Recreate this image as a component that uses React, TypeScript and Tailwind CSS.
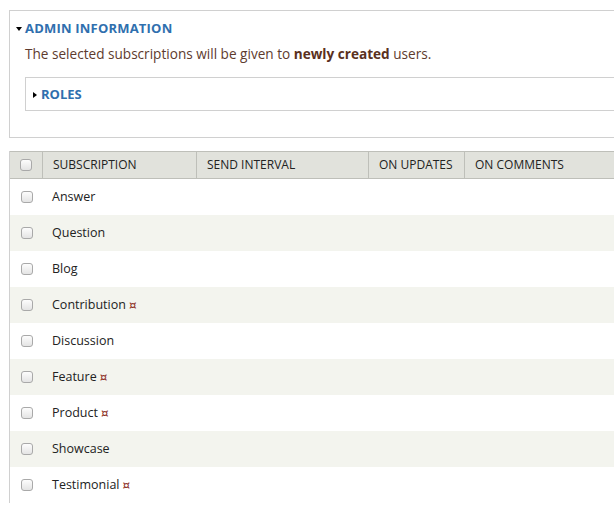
import React from "react";

const rows: { name: string; mark?: boolean }[] = [
  { name: "Answer" },
  { name: "Question" },
  { name: "Blog" },
  { name: "Contribution", mark: true },
  { name: "Discussion" },
  { name: "Feature", mark: true },
  { name: "Product", mark: true },
  { name: "Showcase" },
  { name: "Testimonial", mark: true },
];

function Box() {
  return (
    <span className="block w-[12px] h-[12px] rounded-[3px] border border-[#a9a9a9] bg-gradient-to-b from-[#fdfdfd] to-[#e4e4e4]" />
  );
}

export default function App() {
  return (
    <div className="w-[614px] h-[505px] overflow-hidden bg-white text-[13px] text-[#333] font-['Open_Sans',sans-serif]">
      <div className="pt-[10px] pl-[9px]">
        <div className="w-[640px] h-[128px] border border-[#d0d0d0] pl-[6px]">
          <div className="flex items-center h-[34px] pt-[2px] text-[#2f6fae] font-bold text-[13px] tracking-[0.2px]">
            <span className="inline-block w-0 h-0 border-l-[3.5px] border-r-[3.5px] border-t-[4px] border-l-transparent border-r-transparent border-t-[#000] mr-[3px]" />
            ADMIN INFORMATION
          </div>
          <div className="pl-[9px] text-[#5e3b2e] text-[13.6px] h-[24px] flex items-center pb-[5px]">
            <span>
              The selected subscriptions will be given to <b className="font-bold text-[#5a3020]">newly created</b> users.
            </span>
          </div>
          <div className="ml-[9px] mt-[8px] h-[34px] border border-[#d0d0d0] flex items-center pl-[7px] pt-[1px] text-[#2f6fae] font-bold">
            <span className="inline-block w-0 h-0 border-t-[3.5px] border-b-[3.5px] border-l-[4px] border-t-transparent border-b-transparent border-l-[#000] mr-[4px]" />
            ROLES
          </div>
        </div>
      </div>
      <div className="pl-[9px] mt-[13px]">
        <div className="w-[640px] border-l border-[#d0d0d0]">
          <div className="flex h-[28px] bg-[#e1e2dc] border-t border-b border-[#bebfb9] text-[#222] text-[12px]">
            <div className="w-[33px] flex items-center justify-center border-r border-[#bebfb9]">
              <Box />
            </div>
            <div className="w-[154px] flex items-center pl-[10px] border-r border-[#bebfb9]">SUBSCRIPTION</div>
            <div className="w-[172px] flex items-center pl-[10px] border-r border-[#bebfb9]">SEND INTERVAL</div>
            <div className="w-[96px] flex items-center pl-[10px] border-r border-[#bebfb9]">ON UPDATES</div>
            <div className="flex-1 flex items-center pl-[10px]">ON COMMENTS</div>
          </div>
          {rows.map((r, i) => (
            <div
              key={r.name}
              className={`flex h-[36px] items-center ${i % 2 === 1 ? "bg-[#f3f4ee]" : "bg-white"}`}
            >
              <div className="w-[33px] flex items-center justify-center">
                <Box />
              </div>
              <div className="pl-[9px] text-[#222] text-[12.5px]">
                {r.name}
                {r.mark && <span className="text-[#8b2e1e] text-[12px] ml-[3px] font-['DejaVu_Sans',sans-serif]">¤</span>}
              </div>
            </div>
          ))}
        </div>
      </div>
    </div>
  );
}
